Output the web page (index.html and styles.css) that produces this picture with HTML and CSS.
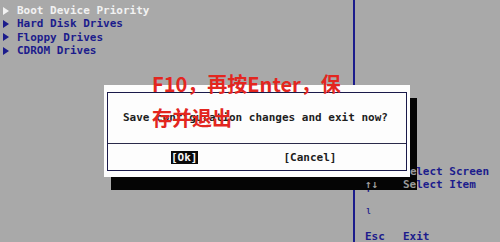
FILE: index.html
```html
<!DOCTYPE html>
<html>
<head>
<meta charset="utf-8">
<link rel="stylesheet" href="styles.css">
</head>
<body>
<div class="screen">
  <div class="main">
    <ul class="menu">
      <li class="item active"><svg class="tri" width="6" height="8" viewBox="0 0 6 8"><polygon points="0,0 6,4 0,8"/></svg>Boot Device Priority</li>
      <li class="item"><svg class="tri" width="6" height="8" viewBox="0 0 6 8"><polygon points="0,0 6,4 0,8"/></svg>Hard Disk Drives</li>
      <li class="item"><svg class="tri" width="6" height="8" viewBox="0 0 6 8"><polygon points="0,0 6,4 0,8"/></svg>Floppy Drives</li>
      <li class="item"><svg class="tri" width="6" height="8" viewBox="0 0 6 8"><polygon points="0,0 6,4 0,8"/></svg>CDROM Drives</li>
    </ul>
    <div class="help">
      <div class="hrow"><span class="key"></span><span>Select Screen</span></div>
      <div class="hrow"><span class="key">↑↓</span><span>Select Item</span></div>
      <div class="hrow"><span class="key frag1">'</span><span></span></div>
      <div class="hrow"><span class="key frag2">ι</span><span></span></div>
      <div class="hrow"><span class="key"></span><span></span></div>
      <div class="hrow"><span class="key">Esc</span><span>Exit</span></div>
    </div>
  </div>

  <div class="shadow">
    <span class="ghost g1">e</span>
    <span class="ghost g2">↑↓</span>
    <span class="ghost g3">Se</span>
  </div>

  <div class="dialog">
    <div class="dialog-inner">
      <div class="message">Save configuration changes and exit now?</div>
      <div class="buttons">
        <span class="btn selected">[Ok]</span>
        <span class="btn">[Cancel]</span>
      </div>
    </div>
  </div>

  <div class="note">F10，再按Enter，保<br>存并退出</div>
</div>
</body>
</html>
```

FILE: styles.css
```css
html, body {
  margin: 0;
  padding: 0;
}

body {
  width: 500px;
  height: 242px;
  overflow: hidden;
  background: #a9a9a9;
}

.screen {
  position: relative;
  width: 500px;
  height: 242px;
  overflow: hidden;
  font-family: "DejaVu Sans Mono", "Liberation Mono", monospace;
  font-weight: bold;
  font-size: 11px;
  color: #1c1c8c;
}

.main {
  display: flex;
  height: 242px;
}

.menu {
  list-style: none;
  margin: 0;
  padding: 4px 0 0 3px;
  width: 350px;
}

.item {
  display: flex;
  align-items: center;
  height: 13.3px;
  line-height: 13.3px;
  white-space: pre;
}

.tri {
  fill: #1c1c8c;
  margin-right: 8px;
}

.item.active {
  color: #f2f2f2;
}

.item.active .tri {
  fill: #f2f2f2;
}

.help {
  border-left: 2px solid #1c1c8c;
  padding: 165px 0 0 10px;
  flex: 1;
}

.hrow {
  display: flex;
  height: 13px;
  line-height: 13px;
  white-space: pre;
}

.key {
  width: 38px;
  flex: none;
}

.frag1 {
  position: relative;
  top: -4px;
}

.frag2 {
  font-weight: normal;
}

.shadow {
  position: absolute;
  left: 111px;
  top: 98px;
  width: 306px;
  height: 92px;
  background: #050505;
}

.ghost {
  position: absolute;
  color: #9a9a9a;
  line-height: 13px;
  white-space: pre;
}

.g1 { left: 299px; top: 67px; }
.g2 { left: 254px; top: 80px; }
.g3 { left: 292px; top: 80px; }

.dialog {
  position: absolute;
  left: 104px;
  top: 85px;
  width: 306px;
  height: 92px;
  background: #fdfdfd;
  padding: 7px 3px 6px 3px;
  box-sizing: border-box;
}

.dialog-inner {
  border: 1px solid #1a1a4a;
  height: 100%;
  box-sizing: border-box;
  display: flex;
  flex-direction: column;
  color: #1e1e1e;
}

.message {
  height: 50px;
  line-height: 50px;
  padding-left: 15px;
  border-bottom: 1px solid #2a2a4a;
  white-space: pre;
}

.buttons {
  flex: 1;
  display: flex;
  align-items: center;
  padding-left: 63px;
  gap: 86px;
}

.btn {
  line-height: 13px;
  height: 13px;
  white-space: pre;
}

.btn.selected {
  background: #0a0a0a;
  color: #f5f5f5;
}

.note {
  position: absolute;
  left: 152px;
  top: 67px;
  font-family: "Noto Sans CJK SC", "Noto Sans", sans-serif;
  font-weight: bold;
  font-size: 20px;
  line-height: 34px;
  color: #e3261f;
  white-space: nowrap;
}
```
